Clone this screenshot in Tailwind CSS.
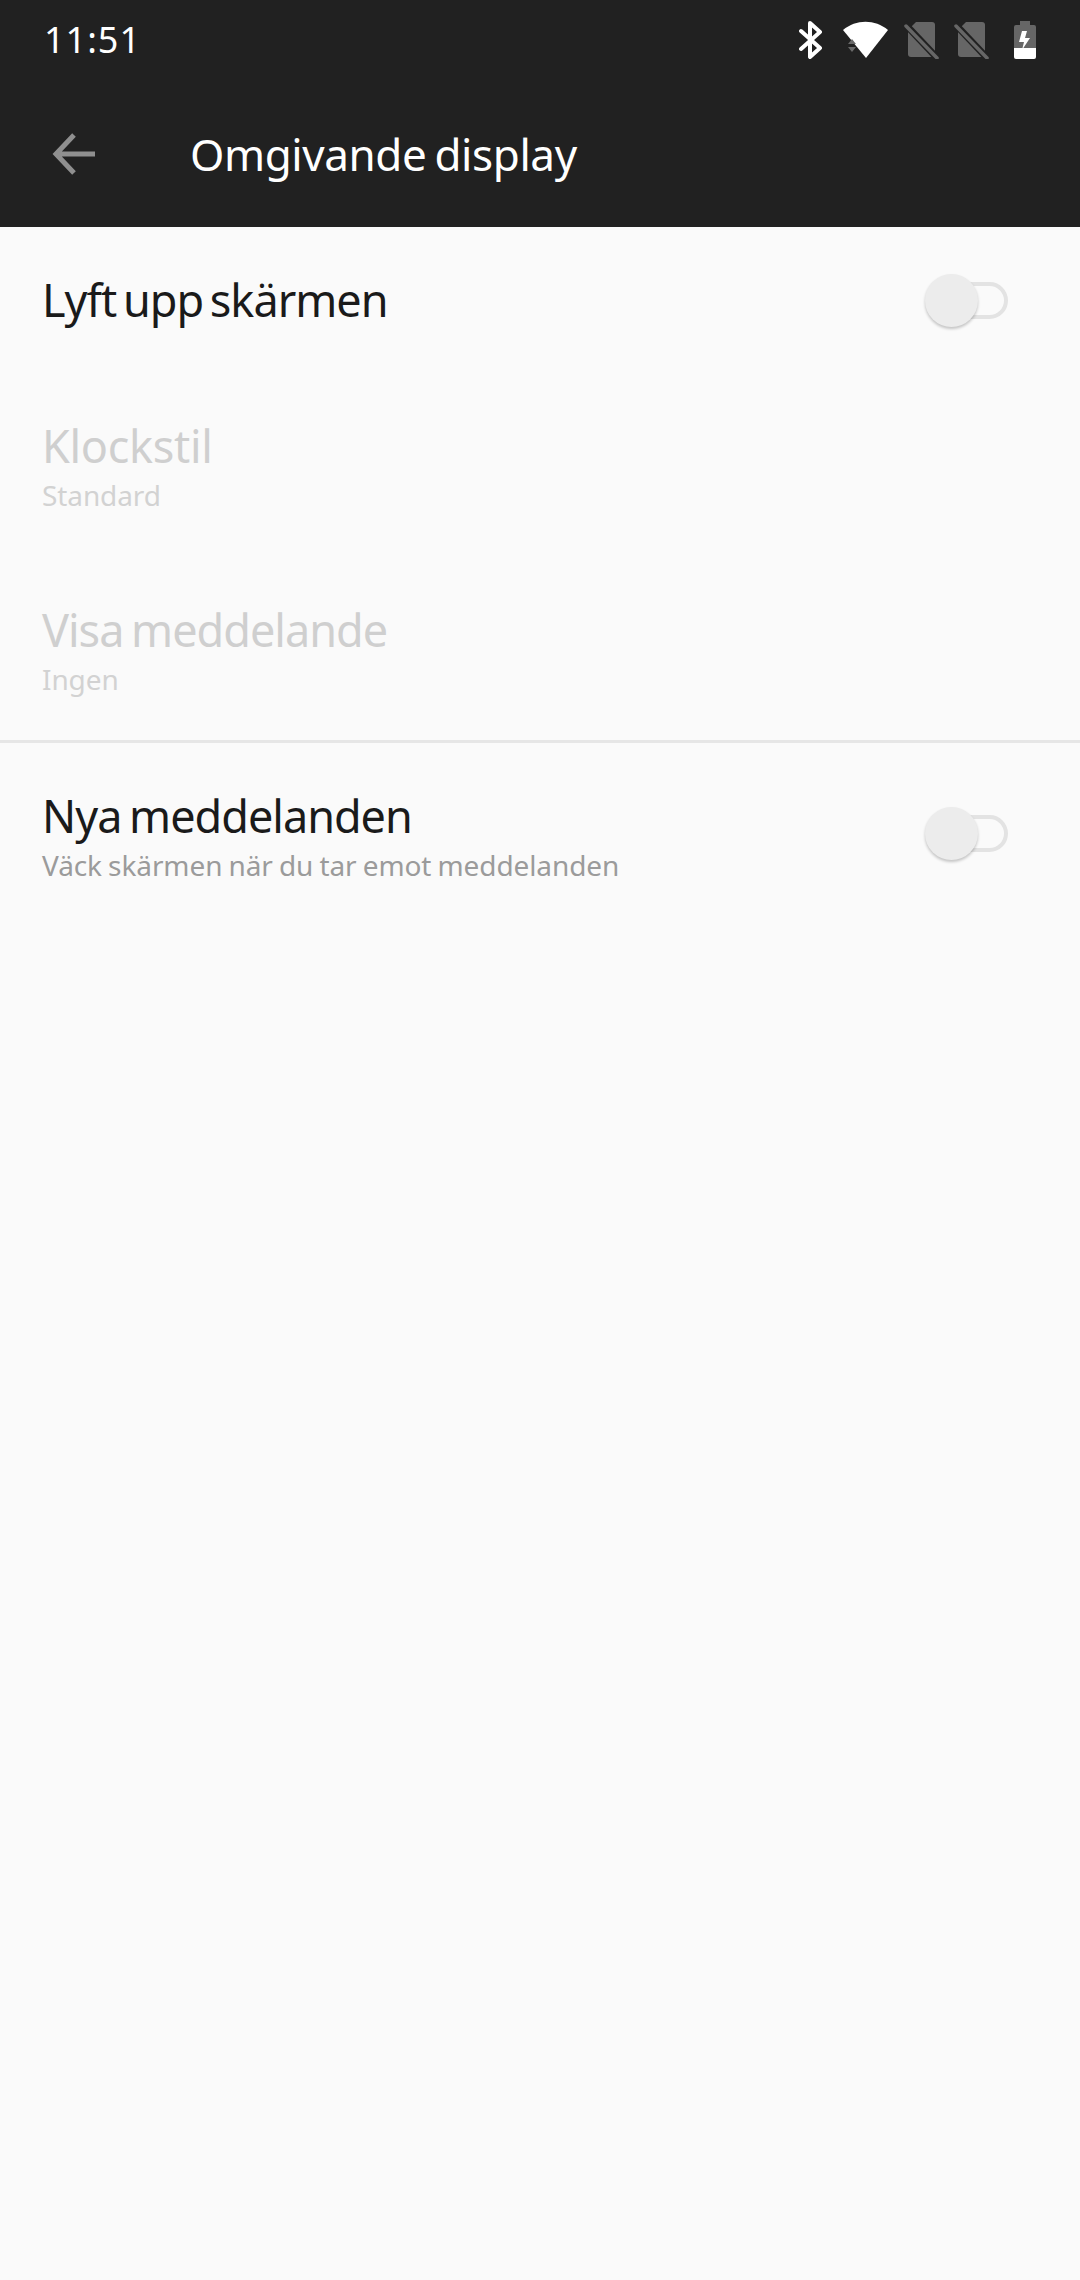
<!DOCTYPE html>
<html lang="sv">
  <head>
    <meta charset="UTF-8" />
    <meta name="viewport" content="width=device-width, initial-scale=1.0" />
    <title>Omgivande display</title>
    <script src="https://cdn.jsdelivr.net/npm/@tailwindcss/browser@4"></script>
  </head>
  <body class="m-0 bg-[#fafafa] font-['Noto_Sans',sans-serif]">
    <div class="w-[1080px] h-[2280px] overflow-hidden bg-[#fafafa]">
      <!-- Status bar + toolbar -->
      <header class="h-[227px] bg-[#212121] text-white">
        <div class="h-[80px] flex items-center justify-between pl-[44px] pr-[44px]">
          <span class="text-[36px] leading-none tracking-[1px]">11:51</span>
          <div class="flex items-center h-[40px]">
            <!-- bluetooth -->
            <svg class="w-[24px] h-[38px]" viewBox="0 0 24 38" fill="none" stroke="#fff" stroke-width="4" stroke-linecap="round" stroke-linejoin="round">
              <path d="M2 10 L21 27 L11 36 L11 2 L21 11 L2 28" />
            </svg>
            <!-- wifi -->
            <svg class="w-[46px] h-[38px] ml-[20px]" viewBox="0 0 46 38">
              <path d="M0 9 C13 -2 32 -2 45 9 L23 37 Z" fill="#fff" />
              <path d="M5 23 L9 18 L13 23 Z M5 26 L13 26 L9 31 Z" fill="#6a6a6a" />
            </svg>
            <!-- no sim 1 -->
            <svg class="w-[36px] h-[38px] ml-[15px]" viewBox="0 0 36 38">
              <path d="M12 1 H28 Q31 1 31 4 V33 Q31 36 28 36 H7 Q4 36 4 33 V9 Z" fill="#666" />
              <path d="M0 2 L36 40" stroke="#212121" stroke-width="7" />
              <path d="M2 5 L33 37" stroke="#666" stroke-width="3.5" stroke-linecap="round" />
            </svg>
            <!-- no sim 2 -->
            <svg class="w-[36px] h-[38px] ml-[14px]" viewBox="0 0 36 38">
              <path d="M12 1 H28 Q31 1 31 4 V33 Q31 36 28 36 H7 Q4 36 4 33 V9 Z" fill="#666" />
              <path d="M0 2 L36 40" stroke="#212121" stroke-width="7" />
              <path d="M2 5 L33 37" stroke="#666" stroke-width="3.5" stroke-linecap="round" />
            </svg>
            <!-- battery charging -->
            <svg class="w-[22px] h-[38px] ml-[24px]" viewBox="0 0 22 38">
              <path d="M6 0 H16 V4 H20 Q22 4 22 6 V27 H0 V6 Q0 4 2 4 H6 Z" fill="#666" />
              <path d="M0 27 H22 V36 Q22 38 20 38 H2 Q0 38 0 36 Z" fill="#fff" />
              <path d="M13 10 H8 L5 21 H10 L8 29 L16 17 H11 Z" fill="#fff" />
            </svg>
          </div>
        </div>
        <div class="h-[147px] flex items-center relative">
          <svg class="absolute left-[52px] top-[53px] w-[44px] h-[42px]" viewBox="0 0 44 42" fill="none" stroke="#8f8f8f" stroke-width="5">
            <path d="M22 2 L4 21 L22 40 M4 21 H43" />
          </svg>
          <h1 class="ml-[190px] text-[44px] leading-none font-normal tracking-[-0.4px] [word-spacing:-3px]">Omgivande display</h1>
        </div>
      </header>

      <!-- Settings list -->
      <section class="h-[146px] flex items-center justify-between pl-[42px] pr-[72px]">
        <div class="text-[#1a1a1a] text-[45px] leading-none mt-[-2px] tracking-[-1px] [word-spacing:-4px]">Lyft upp skärmen</div>
        <div class="relative w-[83px] h-[53px]">
          <div class="absolute right-0 top-[8px] w-[68px] h-[37px] rounded-full border-4 border-[#e3e3e3]"></div>
          <div class="absolute left-0 top-0 w-[53px] h-[53px] rounded-full bg-[#ececec] shadow-[0_2px_3px_rgba(0,0,0,0.22)]"></div>
        </div>
      </section>
      <section class="h-[184px] pl-[42px] pt-[50px]">
        <div class="text-[#cfcfcf] text-[45px] leading-[46px] tracking-[-0.3px]">Klockstil</div>
        <div class="text-[#d2d2d2] text-[28px] leading-[28px] mt-[12px] tracking-[-0.1px]">Standard</div>
      </section>
      <section class="h-[183px] pl-[42px] pt-[50px]">
        <div class="text-[#cfcfcf] text-[45px] leading-[46px] tracking-[-1px] [word-spacing:-3px]">Visa meddelande</div>
        <div class="text-[#d2d2d2] text-[28px] leading-[28px] mt-[12px] tracking-[-0.1px]">Ingen</div>
      </section>
      <div class="h-[3px] bg-[#e6e6e6]"></div>
      <section class="h-[180px] flex items-center justify-between pl-[42px] pr-[72px]">
        <div class="self-start pt-[50px]">
          <div class="text-[#1a1a1a] text-[45px] leading-[46px] tracking-[-1px] [word-spacing:-3px]">Nya meddelanden</div>
          <div class="text-[#9b9b9b] text-[28px] leading-[28px] mt-[12px] tracking-[-0.1px] [word-spacing:-1px]">Väck skärmen när du tar emot meddelanden</div>
        </div>
        <div class="relative w-[83px] h-[53px]">
          <div class="absolute right-0 top-[8px] w-[68px] h-[37px] rounded-full border-4 border-[#e3e3e3]"></div>
          <div class="absolute left-0 top-0 w-[53px] h-[53px] rounded-full bg-[#ececec] shadow-[0_2px_3px_rgba(0,0,0,0.22)]"></div>
        </div>
      </section>
    </div>
  </body>
</html>
